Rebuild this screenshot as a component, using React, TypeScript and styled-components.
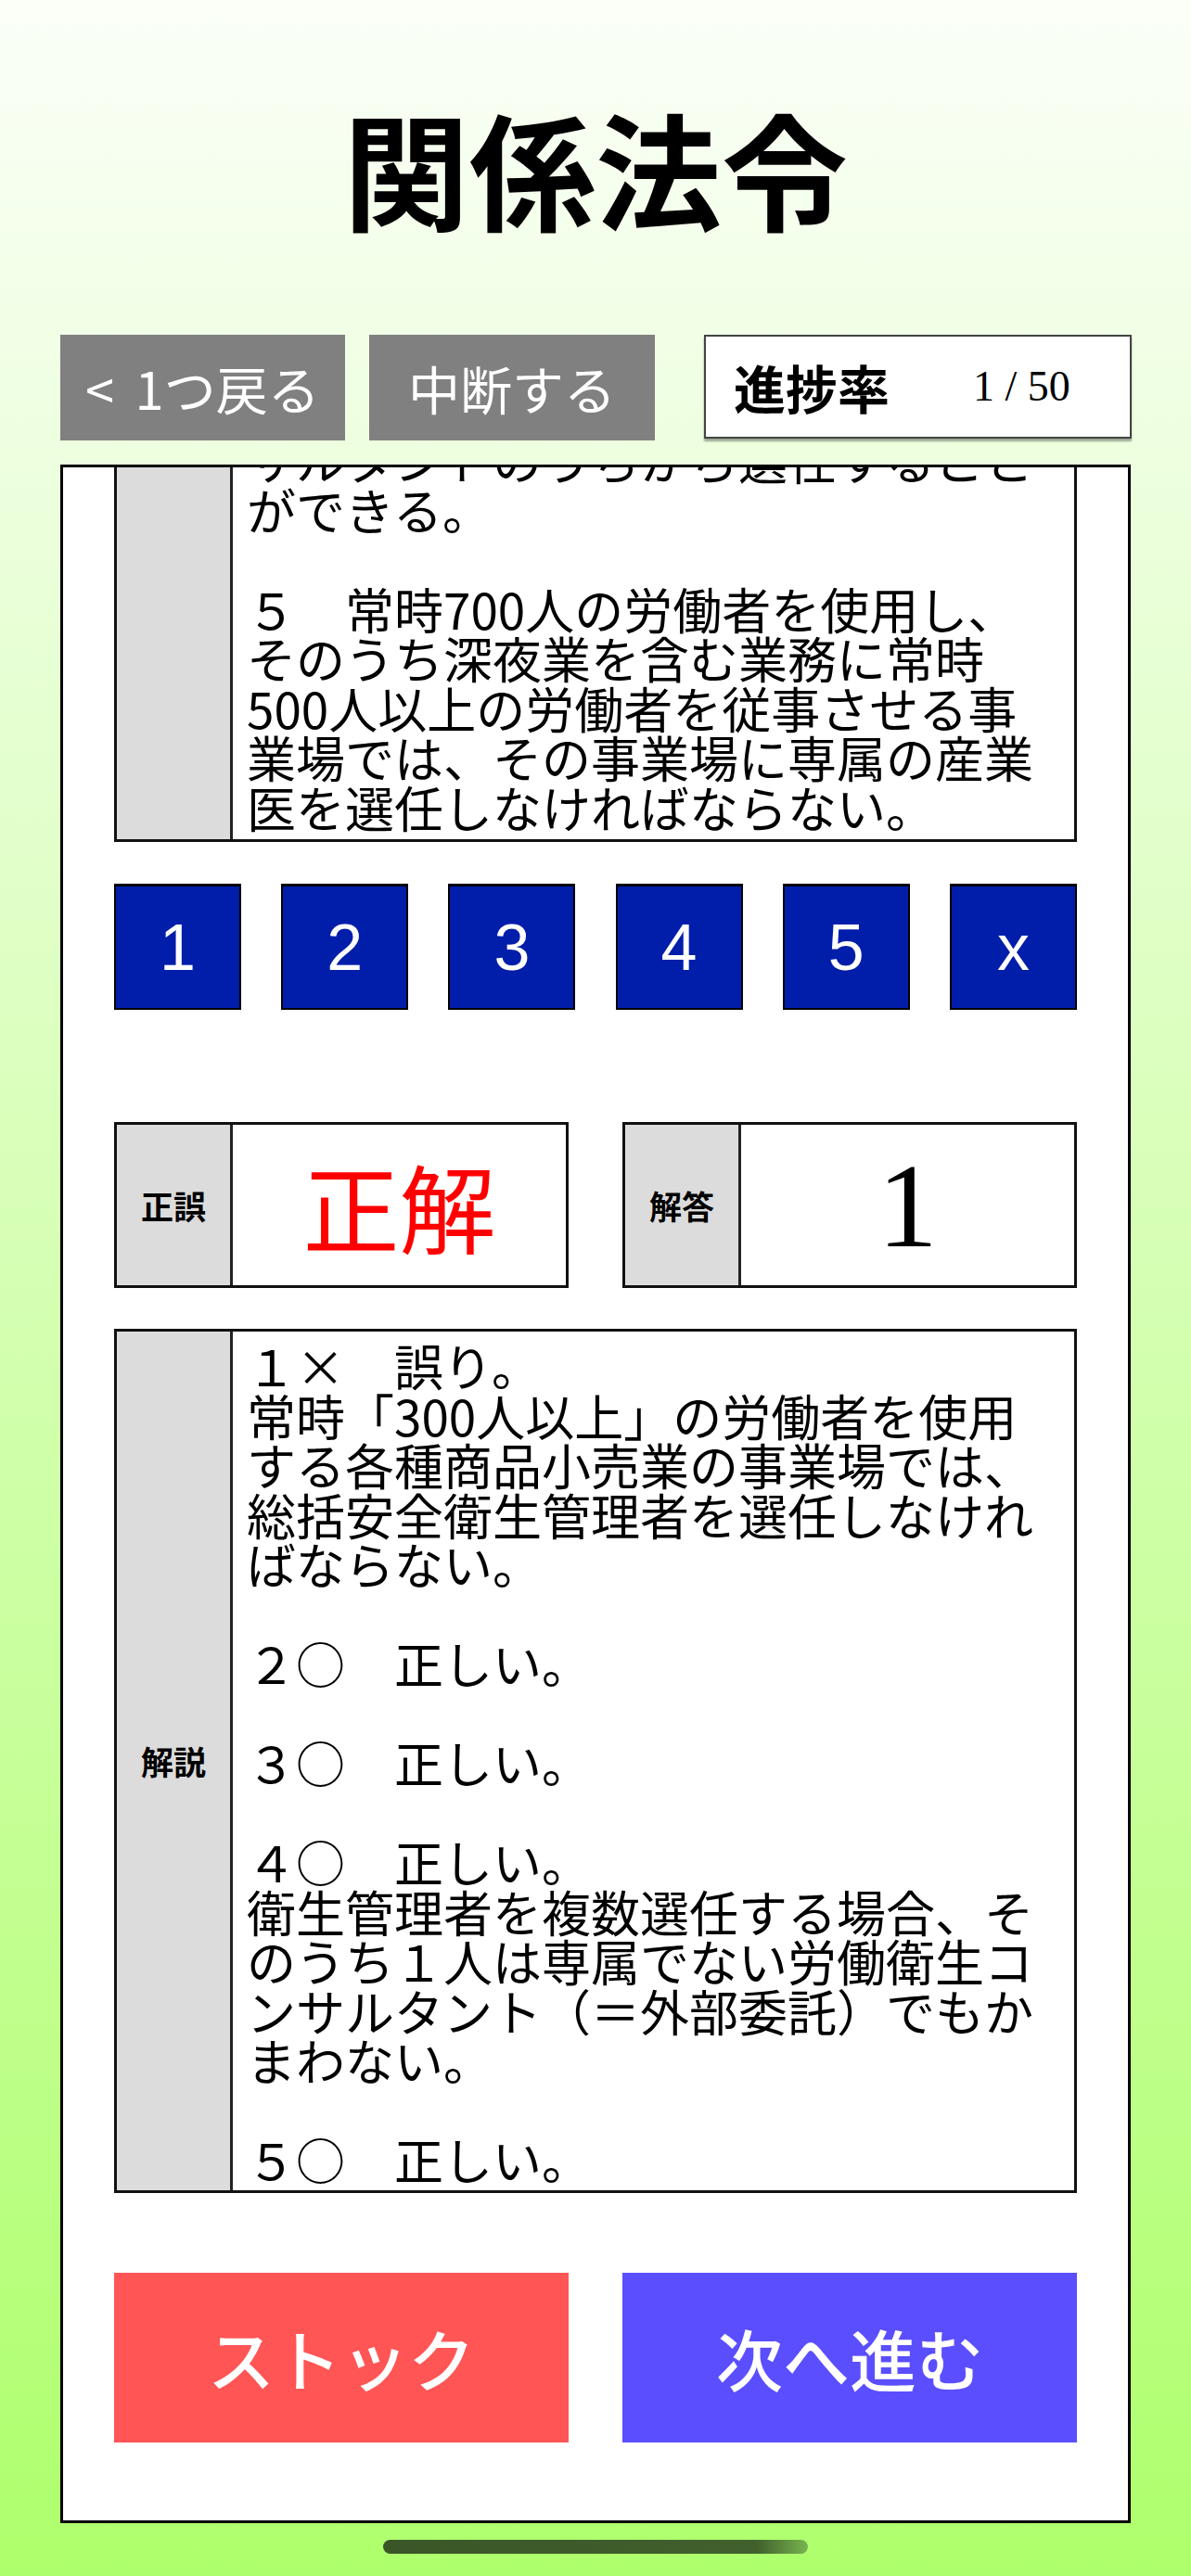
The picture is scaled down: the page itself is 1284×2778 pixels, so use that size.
import React, { useLayoutEffect, useRef } from "react";
import styled, { createGlobalStyle } from "styled-components";

const GlobalStyle = createGlobalStyle`
  html, body {
    margin: 0;
    padding: 0;
  }
  body {
    font-family: "Noto Sans CJK JP", "Noto Sans", sans-serif;
    color: #000;
  }
`;

const Page = styled.div`
  min-height: 2778px;
  box-sizing: border-box;
  background: linear-gradient(180deg, #fbfff8 0%, #aeff6c 100%);
  display: flex;
  flex-direction: column;
  align-items: center;
`;

const Title = styled.h1`
  margin: 112px 0 0;
  height: 136px;
  font-size: 136px;
  line-height: 136px;
  font-weight: 700;
`;

const TopBar = styled.div`
  margin-top: 113px;
  width: 1155px;
  display: flex;
  align-items: flex-start;
`;

const NavButton = styled.button`
  width: 308px;
  height: 114px;
  margin: 0;
  padding: 0;
  border: none;
  background: #808080;
  color: #fff;
  font-family: "Noto Sans CJK JP", sans-serif;
  font-size: 56px;
  line-height: 1;
  font-weight: 400;
  word-spacing: 10px;
  display: flex;
  align-items: center;
  justify-content: center;
  & + & {
    margin-left: 26px;
  }
`;

const ProgressBox = styled.div`
  margin-left: 53px;
  width: 461px;
  height: 112px;
  box-sizing: border-box;
  border: 2px solid #444;
  background: #fff;
  box-shadow: 0 3px 2px rgba(0, 0, 0, 0.35);
  display: flex;
  align-items: center;
  padding-left: 30px;
  gap: 90px;
  line-height: 1;
`;

const ProgressLabel = styled.span`
  font-size: 56px;
  font-weight: 700;
`;

const ProgressCount = styled.span`
  font-family: "Liberation Serif", serif;
  font-size: 46px;
`;

const Card = styled.div`
  margin-top: 26px;
  width: 1154px;
  height: 2220px;
  box-sizing: border-box;
  border: 3px solid #000;
  background: #fff;
  overflow: hidden;
`;

const Scroller = styled.div`
  height: 100%;
  overflow-y: auto;
  scrollbar-width: none;
  &::-webkit-scrollbar {
    display: none;
  }
`;

const Content = styled.div`
  padding: 0 55px 84px;
`;

const TableBox = styled.div<{ $height?: number; $mt?: number }>`
  display: grid;
  grid-template-columns: 125px 1fr;
  box-sizing: border-box;
  border: 3px solid #111;
  height: ${(p) => (p.$height ? `${p.$height}px` : "auto")};
  margin-top: ${(p) => p.$mt ?? 0}px;
  background: #fff;
`;

const Label = styled.div`
  background: #dcdcdc;
  border-right: 3px solid #222;
  display: flex;
  align-items: center;
  justify-content: center;
  font-size: 35px;
  line-height: 1;
  font-weight: 700;
`;

const TextCell = styled.div<{ $pt: number; $pb: number }>`
  padding: ${(p) => p.$pt}px 22px ${(p) => p.$pb}px 15px;
  font-size: 53px;
  line-height: 53.5px;
  white-space: pre-wrap;
  word-break: normal;
  line-break: strict;
`;

const ChoiceRow = styled.div`
  margin-top: 45px;
  display: flex;
  justify-content: space-between;
`;

const ChoiceButton = styled.button`
  width: 137px;
  height: 136px;
  margin: 0;
  padding: 0;
  box-sizing: border-box;
  border: 2px solid #000;
  border-top-width: 3px;
  background: #001eaa;
  color: #fff;
  font-family: "Liberation Sans", Arial, sans-serif;
  font-size: 70px;
  line-height: 1;
  display: flex;
  align-items: center;
  justify-content: center;
`;

const ResultRow = styled.div`
  margin-top: 121px;
  display: flex;
  justify-content: space-between;
`;

const ResultBox = styled(TableBox)`
  width: 490px;
`;

const ResultValue = styled.div<{ $serif?: boolean; $color: string; $size: number }>`
  display: flex;
  align-items: center;
  justify-content: center;
  color: ${(p) => p.$color};
  font-size: ${(p) => p.$size}px;
  font-family: ${(p) =>
    p.$serif ? `"Liberation Serif", serif` : `"Noto Sans CJK JP", sans-serif`};
  line-height: 1;
`;

const ActionRow = styled.div`
  margin-top: 86px;
  display: flex;
  justify-content: space-between;
`;

const ActionButton = styled.button<{ $bg: string }>`
  width: 490px;
  height: 183px;
  margin: 0;
  padding: 0;
  border: none;
  background: ${(p) => p.$bg};
  color: #fff;
  font-family: "Noto Sans CJK JP", sans-serif;
  font-size: 72px;
  line-height: 1;
  font-weight: 500;
  display: flex;
  align-items: center;
  justify-content: center;
`;

const HomeIndicator = styled.div`
  margin-top: 18px;
  width: 458px;
  height: 15px;
  border-radius: 8px;
  background: linear-gradient(90deg, #3a5628 0%, #40602c 88%, #78b450 100%);
`;

// only the tail of the question is in view (the card is scrolled to its end)
const question =
  "サルタントのうちから選任することができる。\n\n" +
  "５　常時700人の労働者を使用し、そのうち深夜業を含む業務に常時500人以上の労働者を従事させる事業場では、その事業場に専属の産業医を選任しなければならない。";

const explanation =
  "１×　誤り。\n" +
  "常時「300人以上」の労働者を使用する各種商品小売業の事業場では、総括安全衛生管理者を選任しなければならない。\n\n" +
  "２○　正しい。\n\n" +
  "３○　正しい。\n\n" +
  "４○　正しい。\n" +
  "衛生管理者を複数選任する場合、そのうち１人は専属でない労働衛生コンサルタント（＝外部委託）でもかまわない。\n\n" +
  "５○　正しい。";

const choices = ["1", "2", "3", "4", "5", "x"];

export default function App() {
  const scrollRef = useRef<HTMLDivElement>(null);

  useLayoutEffect(() => {
    const el = scrollRef.current;
    if (el) el.scrollTop = el.scrollHeight;
  }, []);

  return (
    <Page>
      <GlobalStyle />
      <Title>関係法令</Title>
      <TopBar>
        <NavButton>&lt; 1つ戻る</NavButton>
        <NavButton>中断する</NavButton>
        <ProgressBox>
          <ProgressLabel>進捗率</ProgressLabel>
          <ProgressCount>1 / 50</ProgressCount>
        </ProgressBox>
      </TopBar>
      <Card>
        <Scroller ref={scrollRef}>
          <Content>
            <TableBox>
              <Label />
              <TextCell $pt={10} $pb={8}>
                {question}
              </TextCell>
            </TableBox>
            <ChoiceRow>
              {choices.map((c) => (
                <ChoiceButton key={c}>{c}</ChoiceButton>
              ))}
            </ChoiceRow>
            <ResultRow>
              <ResultBox $height={179}>
                <Label>正誤</Label>
                <ResultValue $color="#ff0000" $size={104}>
                  正解
                </ResultValue>
              </ResultBox>
              <ResultBox $height={179}>
                <Label>解答</Label>
                <ResultValue $serif $color="#000" $size={130}>
                  1
                </ResultValue>
              </ResultBox>
            </ResultRow>
            <TableBox $mt={44}>
              <Label>解説</Label>
              <TextCell $pt={10} $pb={6}>
                {explanation}
              </TextCell>
            </TableBox>
            <ActionRow>
              <ActionButton $bg="#ff5555">ストック</ActionButton>
              <ActionButton $bg="#5a4eff">次へ進む</ActionButton>
            </ActionRow>
          </Content>
        </Scroller>
      </Card>
      <HomeIndicator />
    </Page>
  );
}
